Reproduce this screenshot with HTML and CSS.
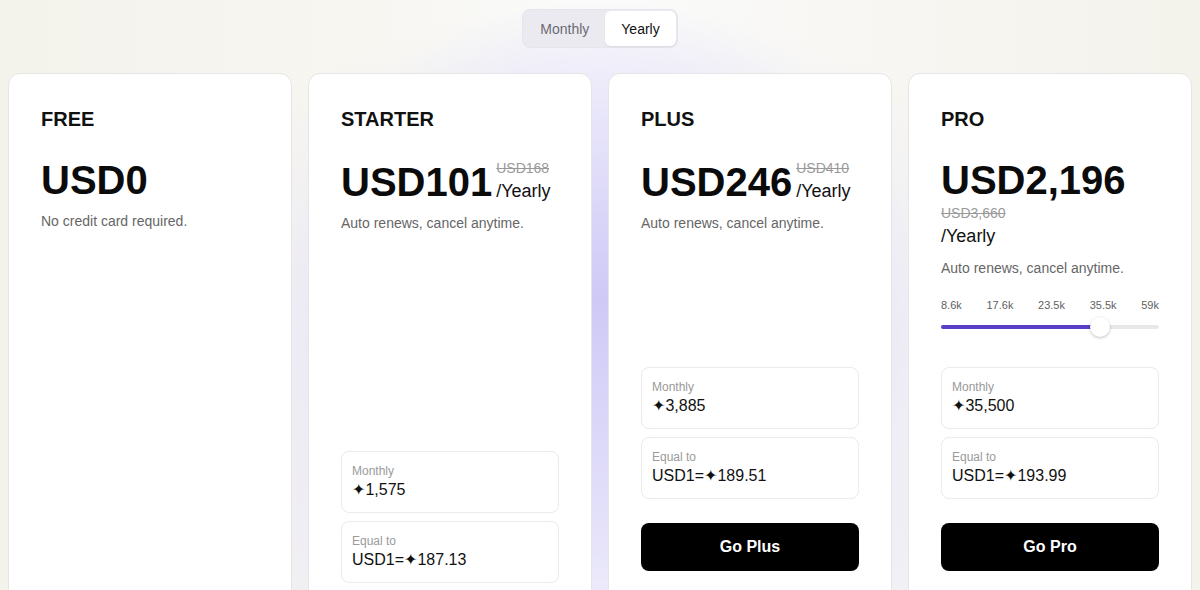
FILE: index.html
```html
<!DOCTYPE html>
<html lang="en">
<head>
<meta charset="utf-8">
<title>Pricing</title>
<link rel="stylesheet" href="styles.css">
</head>
<body>
<div class="page">
  <div class="toggle-wrap">
    <div class="toggle">
      <button class="toggle-btn">Monthly</button>
      <button class="toggle-btn active">Yearly</button>
    </div>
  </div>
  <div class="plans">
    <div class="card">
      <div class="title">FREE</div>
      <div class="price-row">
        <div class="price">USD0</div>
      </div>
      <div class="desc">No credit card required.</div>
    </div>

    <div class="card">
      <div class="title">STARTER</div>
      <div class="price-row">
        <div class="price">USD101</div>
        <div class="price-side">
          <span class="old">USD168</span>
          <span class="period">/Yearly</span>
        </div>
      </div>
      <div class="desc">Auto renews, cancel anytime.</div>
      <div class="bottom">
        <div class="box">
          <div class="box-label">Monthly</div>
          <div class="box-value">&#10022;1,575</div>
        </div>
        <div class="box">
          <div class="box-label">Equal to</div>
          <div class="box-value">USD1=&#10022;187.13</div>
        </div>
      </div>
    </div>

    <div class="card">
      <div class="title">PLUS</div>
      <div class="price-row">
        <div class="price">USD246</div>
        <div class="price-side">
          <span class="old">USD410</span>
          <span class="period">/Yearly</span>
        </div>
      </div>
      <div class="desc">Auto renews, cancel anytime.</div>
      <div class="bottom">
        <div class="box">
          <div class="box-label">Monthly</div>
          <div class="box-value">&#10022;3,885</div>
        </div>
        <div class="box">
          <div class="box-label">Equal to</div>
          <div class="box-value">USD1=&#10022;189.51</div>
        </div>
        <button class="cta">Go Plus</button>
      </div>
    </div>

    <div class="card">
      <div class="title">PRO</div>
      <div class="price-row">
        <div class="price">USD2,196</div>
        <div class="price-side">
          <span class="old">USD3,660</span>
          <span class="period">/Yearly</span>
        </div>
      </div>
      <div class="desc">Auto renews, cancel anytime.</div>
      <div class="slider">
        <div class="ticks">
          <span>8.6k</span><span>17.6k</span><span>23.5k</span><span>35.5k</span><span>59k</span>
        </div>
        <div class="track">
          <div class="fill" style="width: 73%"></div>
          <div class="thumb" style="left: 73%"></div>
        </div>
      </div>
      <div class="bottom">
        <div class="box">
          <div class="box-label">Monthly</div>
          <div class="box-value">&#10022;35,500</div>
        </div>
        <div class="box">
          <div class="box-label">Equal to</div>
          <div class="box-value">USD1=&#10022;193.99</div>
        </div>
        <button class="cta">Go Pro</button>
      </div>
    </div>
  </div>
</div>
</body>
</html>
```

FILE: styles.css
```css
* { box-sizing: border-box; }

html, body {
  margin: 0;
  height: 100%;
}

body {
  font-family: "Liberation Sans", Arial, "DejaVu Sans", sans-serif;
  color: #111;
  overflow: hidden;
  background:
    radial-gradient(ellipse 330px 300px at 600px 300px, rgba(205, 199, 246, 0.95) 0%, rgba(215, 210, 248, 0.6) 45%, rgba(230, 228, 250, 0) 100%),
    radial-gradient(ellipse 500px 420px at 600px 420px, rgba(225, 222, 250, 0.9) 0%, rgba(240, 238, 252, 0) 100%),
    linear-gradient(to right, #f3f2eb 0%, #f7f6f1 30%, #fbfbfb 50%, #f7f6f2 75%, #f3f2eb 100%);
}

.page {
  padding: 9px 8px 0;
}

.toggle-wrap {
  display: flex;
  justify-content: center;
}

.toggle {
  display: flex;
  padding: 1px;
  background: #ebeaf0;
  border: 1px solid #e6e5ec;
  border-radius: 8px;
}

.toggle-btn {
  font-family: inherit;
  font-size: 14px;
  line-height: 18px;
  padding: 9px 16px 8px;
  border: 0;
  border-radius: 6px;
  background: transparent;
  color: #6b6b75;
}

.toggle-btn.active {
  background: #fff;
  color: #111;
  box-shadow: 0 1px 2px rgba(0, 0, 0, 0.06);
}

.plans {
  margin-top: 25px;
  display: grid;
  grid-template-columns: repeat(4, 284px);
  gap: 16px;
}

.card {
  display: flex;
  flex-direction: column;
  background: #fff;
  border: 1px solid #e6e6e6;
  border-radius: 12px;
  padding: 32px;
}

.title {
  font-size: 20px;
  line-height: 26px;
  font-weight: 700;
  color: #111;
  margin-bottom: 26px;
}

.price-row {
  display: flex;
  flex-wrap: wrap;
  align-items: flex-end;
  column-gap: 4px;
  row-gap: 1px;
}

.price {
  font-size: 40px;
  line-height: 44px;
  font-weight: 700;
  color: #0b0b0c;
}

.price-side {
  display: flex;
  flex-direction: column;
}

.old {
  font-size: 14px;
  line-height: 20px;
  color: #9a9a9a;
  text-decoration: line-through;
}

.period {
  font-size: 18px;
  line-height: 26px;
  color: #111;
}

.desc {
  margin-top: 9px;
  font-size: 14px;
  line-height: 20px;
  color: #666;
}

.slider {
  margin-top: 19px;
}

.ticks {
  display: flex;
  justify-content: space-between;
  font-size: 11px;
  line-height: 16px;
  color: #5f5f5f;
}

.track {
  position: relative;
  margin-top: 8px;
  height: 4px;
  margin-bottom: 4px;
  background: #e8e8e8;
  border-radius: 2px;
  top: 4px;
}

.fill {
  height: 4px;
  background: #5a3fc8;
  border-radius: 2px;
}

.thumb {
  position: absolute;
  top: 50%;
  width: 20px;
  height: 20px;
  margin-left: -10px;
  margin-top: -10px;
  background: #fff;
  border-radius: 50%;
  box-shadow: 0 1px 3px rgba(0, 0, 0, 0.25);
}

.bottom {
  margin-top: auto;
  padding-top: 38px;
  display: flex;
  flex-direction: column;
  gap: 8px;
}

.box {
  border: 1px solid #ebebeb;
  border-radius: 8px;
  padding: 11px 10px 11px;
}

.box-label {
  font-size: 12px;
  line-height: 16px;
  color: #9a9a9a;
}

.box-value {
  font-size: 16px;
  line-height: 22px;
  color: #111;
}

.cta {
  margin-top: 16px;
  margin-bottom: 12px;
  height: 48px;
  border: 0;
  border-radius: 8px;
  background: #000;
  color: #fff;
  font-family: inherit;
  font-size: 16px;
  font-weight: 700;
}
```
